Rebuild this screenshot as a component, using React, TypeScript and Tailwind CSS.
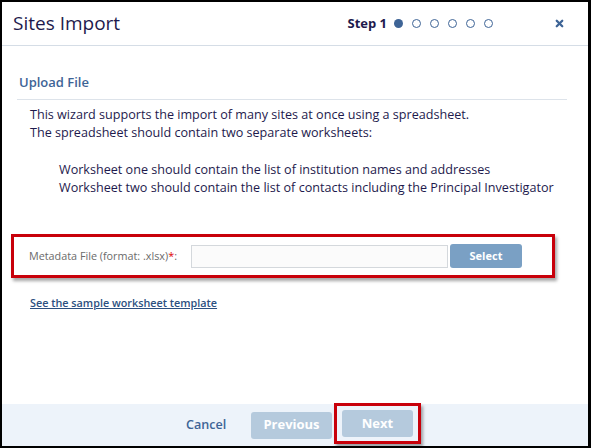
import { X } from 'lucide-react'

const steps = [true, false, false, false, false, false]

export default function App() {
  return (
    <div className="w-[591px] h-[448px] bg-black pl-[2px] pt-[2px] pr-[3px] pb-[2px] font-['Open_Sans',sans-serif]">
      <div className="h-full bg-white flex flex-col">
        {/* header */}
        <div className="h-[44px] border-b border-[#d5dde6] flex items-center pl-[11px] pr-[23px] shrink-0">
          <h1 className="text-[19px] text-[#1e1a4d] leading-none">Sites Import</h1>
          <div className="ml-auto flex items-center">
            <span className="text-[13px] font-bold text-[#1e1a4d] mr-[7px]">Step 1</span>
            <div className="flex items-center gap-[9px]">
              {steps.map((on, i) => (
                <span
                  key={i}
                  className={
                    on
                      ? 'w-[9px] h-[9px] rounded-full bg-[#3e6496]'
                      : 'w-[9px] h-[9px] rounded-full border border-[#3e6496]'
                  }
                />
              ))}
            </div>
          </div>
          <X className="ml-[61px] w-[11px] h-[11px] text-[#3e6496]" strokeWidth={5} />
        </div>

        {/* body */}
        <div className="flex-1 px-[15px]">
          <div className="pt-[27px] pb-[8px] pl-[2px] border-b border-[#dde3ea] mr-[6px]">
            <h2 className="text-[13px] font-semibold text-[#3e6496] leading-[18px]">Upload File</h2>
          </div>
          <div className="pl-[13px] pt-[6px] text-[12.6px] leading-[18px] text-[#1e1a4d]">
            <p>This wizard supports the import of many sites at once using a spreadsheet.</p>
            <p>The spreadsheet should contain two separate worksheets:</p>
            <div className="pl-[29px] pt-[19px]">
              <p>Worksheet one should contain the list of institution names and addresses</p>
              <p>Worksheet two should contain the list of contacts including the Principal Investigator</p>
            </div>
          </div>

          <div className="mt-[37px] -ml-[6px] w-[544px] h-[44px] border-[3px] border-[#c8000a] shadow-[2px_3px_3px_rgba(0,0,0,0.35)] flex items-center pl-[15px]">
            <label className="text-[10.8px] text-[#6b6b6b] w-[162px]">
              Metadata File (format: .xlsx)<span className="text-[#e00000]">*</span>:
            </label>
            <div className="w-[257px] h-[23px] border border-[#d4d8dc] bg-[#fbfbfb]" />
            <button className="ml-[2px] w-[72px] h-[24px] rounded-[3px] bg-[#7aa0c4] text-white text-[11px] font-bold">
              Select
            </button>
          </div>

          <a className="block mt-[17px] ml-[13px] text-[10.8px] font-semibold text-[#2b4f80] underline">
            See the sample worksheet template
          </a>
        </div>

        {/* footer */}
        <div className="h-[42px] bg-[#edf3fa] flex items-center shrink-0 pl-[184px]">
          <button className="text-[12.6px] font-semibold text-[#3e6496] w-[44px] text-left">Cancel</button>
          <button className="ml-[21px] w-[81px] h-[27px] rounded-[3px] bg-[#b5cadd] text-white text-[13px] font-bold">
            Previous
          </button>
          <div className="ml-[2px] border-[3px] border-[#c8000a] shadow-[2px_3px_3px_rgba(0,0,0,0.35)] h-[41px] px-[5px] flex items-center self-start -mt-px">
            <button className="w-[71px] h-[27px] rounded-[3px] bg-[#b5cadd] text-white text-[13px] font-bold">
              Next
            </button>
          </div>
        </div>
      </div>
    </div>
  )
}
